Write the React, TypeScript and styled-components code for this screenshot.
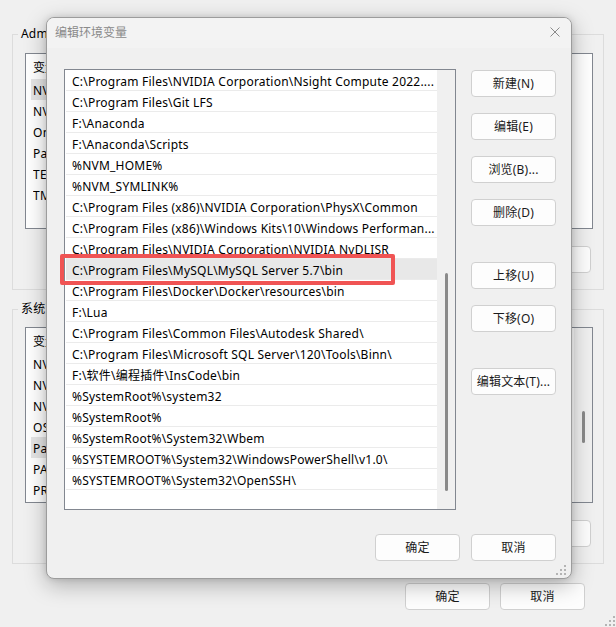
import React from "react";
import styled, { createGlobalStyle } from "styled-components";

const GlobalStyle = createGlobalStyle`
  html, body { margin: 0; padding: 0; }
  body {
    width: 616px;
    height: 627px;
    overflow: hidden;
    background: #f0f0f0;
    font-family: "Noto Sans", "Noto Sans CJK SC", sans-serif;
    font-size: 12px;
    color: #000;
  }
  * { box-sizing: border-box; }
`;

const Desktop = styled.div`
  position: relative;
  width: 616px;
  height: 627px;
  overflow: hidden;
`;

/* ---------- background window ---------- */
const Window = styled.div`
  width: 616px;
  height: 627px;
  background: #f0f0f0;
  padding: 34px 12px 17px 12px;
  display: flex;
  flex-direction: column;
`;

const Group = styled.div<{ $mt?: number; $pt: number }>`
  position: relative;
  margin-top: ${(p) => p.$mt ?? 0}px;
  border: 1px solid #dcdcdc;
  padding: ${(p) => p.$pt}px 10px 16px 12px;
  display: flex;
  flex-direction: column;
`;

const Legend = styled.span`
  position: absolute;
  top: -9px;
  left: 5px;
  padding: 0 3px;
  line-height: 16px;
  background: #f0f0f0;
  white-space: nowrap;
  letter-spacing: 0.2px;
`;

const VarList = styled.div`
  height: 176px;
  border: 1px solid #828790;
  background: #fff;
  display: flex;
  overflow: hidden;
`;

const VarRows = styled.div`
  flex: 1;
  min-width: 0;
  display: flex;
  flex-direction: column;
  padding-right: 60px;
`;

const VarHeader = styled.div`
  height: 25px;
  display: flex;
  align-items: center;
  padding: 1px 0 0 7px;
`;

const VarRow = styled.div<{ $sel?: boolean }>`
  height: 21px;
  display: flex;
  align-items: center;
  margin-left: 5px;
  padding: 1px 0 0 2px;
  letter-spacing: 0.3px;
  background: ${(p) => (p.$sel ? "#e5e5e5" : "transparent")};
`;

const NameCell = styled.span`
  width: 170px;
  flex: none;
  white-space: nowrap;
  overflow: hidden;
`;

const ValueCell = styled.span`
  flex: 1;
  min-width: 0;
  white-space: nowrap;
  overflow: hidden;
`;

const BgTrack = styled.div`
  width: 18px;
  flex: none;
  background: #f0f0f0;
  display: flex;
  justify-content: center;
`;

const BgThumb = styled.div<{ $top: number; $h: number }>`
  margin-top: ${(p) => p.$top}px;
  width: 3px;
  height: ${(p) => p.$h}px;
  border-radius: 2px;
  background: #8a8a8a;
`;

const ButtonRow = styled.div<{ $mt: number; $pr: number }>`
  margin-top: ${(p) => p.$mt}px;
  padding-right: ${(p) => p.$pr}px;
  display: flex;
  justify-content: flex-end;
  gap: 10px;
`;

const Btn = styled.button<{ $mt?: number }>`
  width: 85px;
  height: 27px;
  margin: ${(p) => p.$mt ?? 0}px 0 0 0;
  padding: 1px 0 0 0;
  border: 1px solid #d0d0d0;
  border-radius: 4px;
  background: #fdfdfd;
  font-family: "Noto Sans", "Noto Sans CJK SC", sans-serif;
  font-size: 12px;
  letter-spacing: 0.2px;
  color: #1a1a1a;
  line-height: 24px;
  white-space: nowrap;
`;

const Grip = styled.svg<{ $r: number; $b: number }>`
  position: absolute;
  right: ${(p) => p.$r}px;
  bottom: ${(p) => p.$b}px;
`;

/* ---------- dialog ---------- */
const Dialog = styled.div`
  position: absolute;
  left: 46px;
  top: 17px;
  width: 526px;
  height: 562px;
  border: 1px solid #9c9c9c;
  border-radius: 8px;
  background: #f0f0f0;
  box-shadow: 0 6px 22px rgba(0, 0, 0, 0.28), 0 0 6px rgba(0, 0, 0, 0.12);
  display: flex;
  flex-direction: column;
  overflow: hidden;
`;

const TitleBar = styled.div`
  height: 30px;
  flex: none;
  background: #f3f3f3;
  display: flex;
  align-items: center;
  justify-content: space-between;
  padding: 0 11px 2px 8px;
`;

const Title = styled.span`
  color: #8a8a8a;
  font-size: 12px;
`;

const Body = styled.div`
  flex: 1;
  padding: 21px 15px 17px 17px;
  display: flex;
  flex-direction: column;
`;

const Main = styled.div`
  display: flex;
  gap: 15px;
`;

const PathList = styled.div`
  width: 392px;
  height: 441px;
  border: 1px solid #828790;
  background: #fff;
  display: flex;
`;

const PathRows = styled.div`
  flex: 1;
  min-width: 0;
  display: flex;
  flex-direction: column;
`;

const PathRow = styled.div<{ $sel?: boolean }>`
  height: 21px;
  flex: none;
  border-bottom: 1px solid #ebebeb;
  margin-left: 1px;
  padding: 3px 0 0 6px;
  line-height: 17px;
  letter-spacing: 0.22px;
  white-space: nowrap;
  overflow: hidden;
  color: #000;
  background: ${(p) => (p.$sel ? "#e8e8e8" : "transparent")};
`;

const Track = styled.div`
  width: 18px;
  flex: none;
  background: #f0f0f0;
  display: flex;
  justify-content: center;
`;

const Thumb = styled.div<{ $top: number; $h: number }>`
  margin-top: ${(p) => p.$top}px;
  width: 3px;
  height: ${(p) => p.$h}px;
  border-radius: 2px;
  background: #8a8a8a;
`;

const SideButtons = styled.div`
  width: 85px;
  padding-top: 1px;
  display: flex;
  flex-direction: column;
  gap: 16px;
`;

const Footer = styled.div`
  margin-top: 24px;
  display: flex;
  justify-content: flex-end;
  gap: 11px;
`;

const Highlight = styled.div`
  position: absolute;
  left: 13px;
  top: 236px;
  width: 335px;
  height: 31px;
  border: 4px solid #f05454;
  border-radius: 2px;
  pointer-events: none;
`;

const userVars = [
  ["NVM_HOME", "F:\\nvm", true],
  ["NVM_SYMLINK", "F:\\nodejs", false],
  ["OneDrive", "C:\\Users\\Administrator\\OneDrive", false],
  ["Path", "%USERPROFILE%\\AppData\\Local\\...", false],
  ["TEMP", "%USERPROFILE%\\AppData\\Local\\Temp", false],
  ["TMP", "%USERPROFILE%\\AppData\\Local\\Temp", false],
] as const;

const sysVars = [
  ["NVCUDASAMPLES_ROOT", "C:\\ProgramData\\NVIDIA Corporation", false],
  ["NVCUDASAMPLES11_8_ROOT", "C:\\ProgramData\\NVIDIA Corporation", false],
  ["NVTOOLSEXT_PATH", "C:\\Program Files\\NVIDIA Corporation", false],
  ["OS", "Windows_NT", false],
  ["Path", "C:\\Program Files\\NVIDIA GPU Computing...", true],
  ["PATHEXT", ".COM;.EXE;.BAT;.CMD;.VBS;.VBE;.JS", false],
  ["PROCESSOR_ARCHITECTURE", "AMD64", false],
] as const;

const paths = [
  "C:\\Program Files\\NVIDIA Corporation\\Nsight Compute 2022....",
  "C:\\Program Files\\Git LFS",
  "F:\\Anaconda",
  "F:\\Anaconda\\Scripts",
  "%NVM_HOME%",
  "%NVM_SYMLINK%",
  "C:\\Program Files (x86)\\NVIDIA Corporation\\PhysX\\Common",
  "C:\\Program Files (x86)\\Windows Kits\\10\\Windows Performan...",
  "C:\\Program Files\\NVIDIA Corporation\\NVIDIA NvDLISR",
  "C:\\Program Files\\MySQL\\MySQL Server 5.7\\bin",
  "C:\\Program Files\\Docker\\Docker\\resources\\bin",
  "F:\\Lua",
  "C:\\Program Files\\Common Files\\Autodesk Shared\\",
  "C:\\Program Files\\Microsoft SQL Server\\120\\Tools\\Binn\\",
  "F:\\软件\\编程插件\\InsCode\\bin",
  "%SystemRoot%\\system32",
  "%SystemRoot%",
  "%SystemRoot%\\System32\\Wbem",
  "%SYSTEMROOT%\\System32\\WindowsPowerShell\\v1.0\\",
  "%SYSTEMROOT%\\System32\\OpenSSH\\",
];

const GripIcon = ({ r, b }: { r: number; b: number }) => (
  <Grip $r={r} $b={b} width="10" height="10" viewBox="0 0 10 10">
    <g fill="#b4b4b4">
      <rect x="8" y="0" width="2" height="2" />
      <rect x="4" y="4" width="2" height="2" />
      <rect x="8" y="4" width="2" height="2" />
      <rect x="0" y="8" width="2" height="2" />
      <rect x="4" y="8" width="2" height="2" />
      <rect x="8" y="8" width="2" height="2" />
    </g>
  </Grip>
);

export default function App() {
  return (
    <Desktop>
      <GlobalStyle />
      <Window>
        <Group $pt={18}>
          <Legend>Administrator 的用户变量(U)</Legend>
          <VarList>
            <VarRows>
              <VarHeader>
                <NameCell>变量</NameCell>
                <ValueCell>值</ValueCell>
              </VarHeader>
              {userVars.map(([n, v, s]) => (
                <VarRow key={n} $sel={s}>
                  <NameCell>{n}</NameCell>
                  <ValueCell>{v}</ValueCell>
                </VarRow>
              ))}
            </VarRows>
          </VarList>
          <ButtonRow $mt={17} $pr={2}>
            <Btn>新建(N)...</Btn>
            <Btn>编辑(E)...</Btn>
            <Btn>删除(D)</Btn>
          </ButtonRow>
        </Group>
        <Group $mt={19} $pt={17}>
          <Legend>系统变量(S)</Legend>
          <VarList>
            <VarRows>
              <VarHeader>
                <NameCell>变量</NameCell>
                <ValueCell>值</ValueCell>
              </VarHeader>
              {sysVars.map(([n, v, s]) => (
                <VarRow key={n} $sel={s}>
                  <NameCell>{n}</NameCell>
                  <ValueCell>{v}</ValueCell>
                </VarRow>
              ))}
            </VarRows>
            <BgTrack>
              <BgThumb $top={83} $h={32} />
            </BgTrack>
          </VarList>
          <ButtonRow $mt={17} $pr={2}>
            <Btn>新建(W)...</Btn>
            <Btn>编辑(I)...</Btn>
            <Btn>删除(L)</Btn>
          </ButtonRow>
        </Group>
        <ButtonRow $mt={19} $pr={19}>
          <Btn>确定</Btn>
          <Btn>取消</Btn>
        </ButtonRow>
      </Window>
      <GripIcon r={1} b={1} />

      <Dialog>
        <TitleBar>
          <Title>编辑环境变量</Title>
          <svg width="10" height="10" viewBox="0 0 10 10">
            <path d="M0.5 0.5 L9.5 9.5 M9.5 0.5 L0.5 9.5" stroke="#8a8a8a" strokeWidth="1" fill="none" />
          </svg>
        </TitleBar>
        <Body>
          <Main>
            <PathList>
              <PathRows>
                {paths.map((p, i) => (
                  <PathRow key={i} $sel={i === 9}>
                    {p}
                  </PathRow>
                ))}
              </PathRows>
              <Track>
                <Thumb $top={203} $h={218} />
              </Track>
            </PathList>
            <SideButtons>
              <Btn>新建(N)</Btn>
              <Btn>编辑(E)</Btn>
              <Btn>浏览(B)...</Btn>
              <Btn>删除(D)</Btn>
              <Btn $mt={20}>上移(U)</Btn>
              <Btn>下移(O)</Btn>
              <Btn $mt={20}>编辑文本(T)...</Btn>
            </SideButtons>
          </Main>
          <Footer>
            <Btn>确定</Btn>
            <Btn>取消</Btn>
          </Footer>
        </Body>
        <Highlight />
        <GripIcon r={5} b={3} />
      </Dialog>
    </Desktop>
  );
}
